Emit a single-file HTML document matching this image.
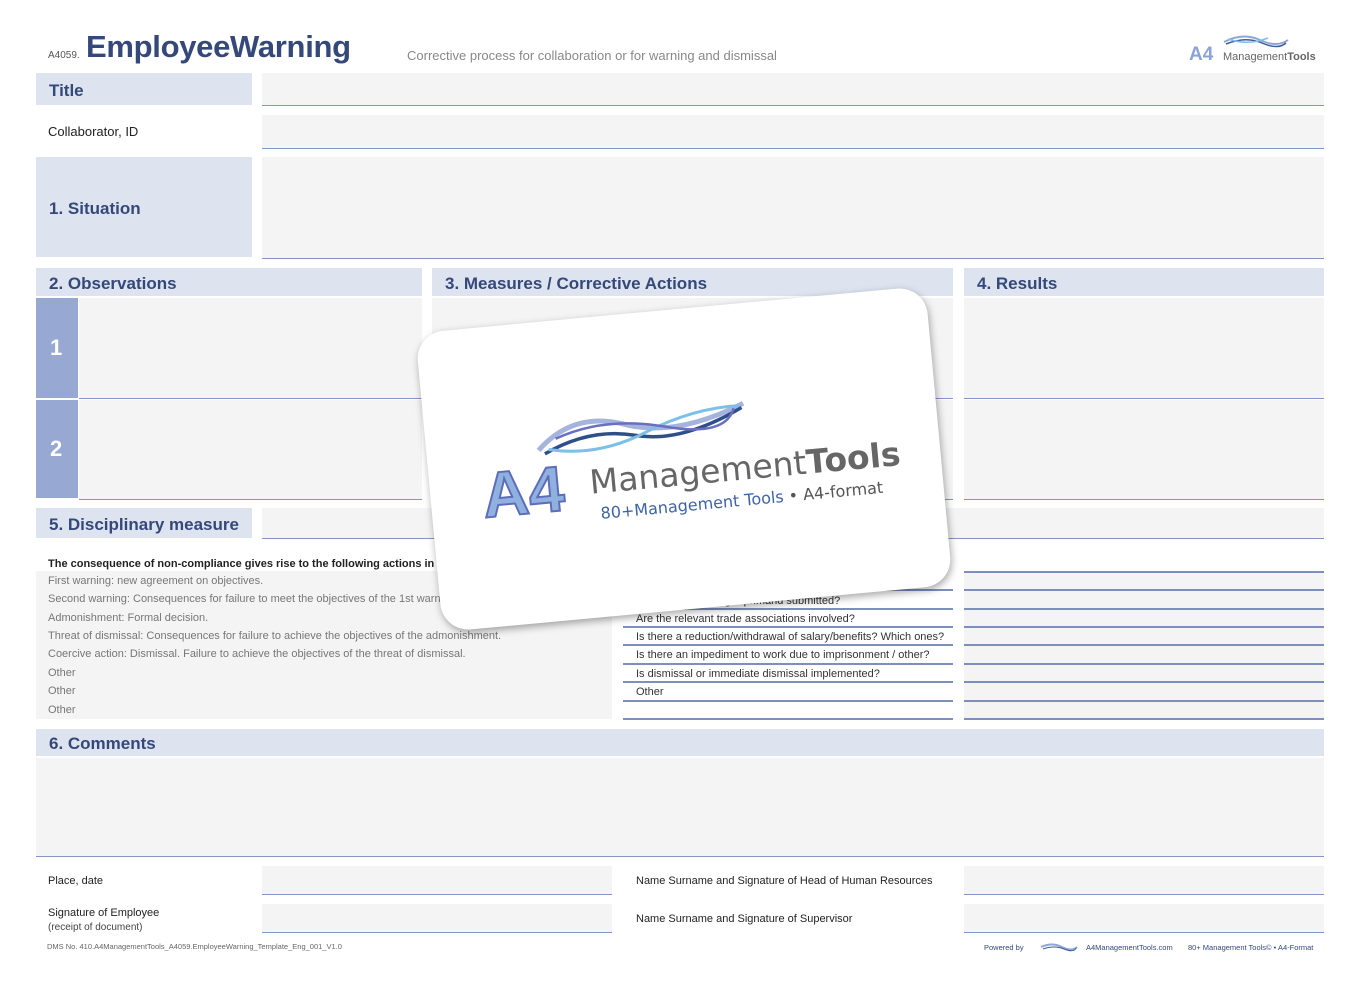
<!DOCTYPE html>
<html><head><meta charset="utf-8"><style>
*{margin:0;padding:0;box-sizing:border-box}
body{width:1362px;height:983px;background:#fff;position:relative;overflow:hidden;font-family:"Liberation Sans",sans-serif;color:#222}
.a{position:absolute}
.lab{position:absolute;background:#dde3ef;color:#34497a;font-weight:bold;font-size:17px;padding-left:13px;padding-top:3px;display:flex;align-items:center}
.f{position:absolute;background:#f4f4f4;border-bottom:1.5px solid #8496c3}
.num{position:absolute;background:#97a8d2;color:#fff;font-weight:bold;font-size:22px;display:flex;align-items:center;padding-left:14px}
.t{position:absolute;font-size:11px;color:#777}
.r{position:absolute;font-size:11px;color:#333;left:636px}
.ln{position:absolute;height:1.5px;background:#7d90bd}
</style></head><body>
<div class="a" style="left:48px;top:50px;font-size:10px;color:#555">A4059.</div>
<div class="a" style="left:86px;top:29px;font-size:31px;font-weight:bold;color:#34497a;letter-spacing:-0.3px">EmployeeWarning</div>
<div class="a" style="left:407px;top:48px;font-size:13px;color:#888">Corrective process for collaboration or for warning and dismissal</div>
<svg class="a" style="left:1188px;top:32px" width="130" height="32" viewBox="0 0 130 32">
<path d="M36 10 Q55 0 72 8 T100 8" stroke="#8fa6d6" stroke-width="2" fill="none"/>
<path d="M38 12 Q58 4 74 11 T98 11" stroke="#3f5c95" stroke-width="1.5" fill="none"/>
<path d="M40 7 Q60 14 80 6" stroke="#7cc0ea" stroke-width="1.5" fill="none"/>
<text x="1" y="28" font-family="Liberation Sans" font-weight="bold" font-size="19" fill="#8aa3d8">A4</text>
<text x="35" y="28" font-family="Liberation Sans" font-size="11" fill="#666">Management<tspan font-weight="bold">Tools</tspan></text>
</svg>

<div class="lab" style="left:36px;top:73px;width:216px;height:32px">Title</div>
<div class="f" style="left:262px;top:73px;width:1062px;height:33px"></div>
<div class="a" style="left:48px;top:124px;font-size:13px;color:#222">Collaborator, ID</div>
<div class="f" style="left:262px;top:115px;width:1062px;height:34px"></div>
<div class="lab" style="left:36px;top:157px;width:216px;height:100px">1. Situation</div>
<div class="f" style="left:262px;top:157px;width:1062px;height:102px"></div>

<div class="lab" style="left:36px;top:268px;width:386px;height:28px">2. Observations</div>
<div class="lab" style="left:432px;top:268px;width:521px;height:28px">3. Measures / Corrective Actions</div>
<div class="lab" style="left:964px;top:268px;width:360px;height:28px">4. Results</div>
<div class="num" style="left:36px;top:298px;width:42px;height:100px">1</div>
<div class="f" style="left:79px;top:298px;width:343px;height:101px"></div>
<div class="f" style="left:432px;top:298px;width:521px;height:101px"></div>
<div class="f" style="left:964px;top:298px;width:360px;height:101px"></div>
<div class="num" style="left:36px;top:400px;width:42px;height:98px">2</div>
<div class="f" style="left:79px;top:400px;width:343px;height:100px"></div>
<div class="f" style="left:432px;top:400px;width:521px;height:100px"></div>
<div class="f" style="left:964px;top:400px;width:360px;height:100px"></div>

<div class="lab" style="left:36px;top:508px;width:216px;height:30px">5. Disciplinary measure</div>
<div class="f" style="left:262px;top:508px;width:1062px;height:31px"></div>
<div class="a" style="left:48px;top:558px;font-size:11px;font-weight:bold;color:#222">The consequence of non-compliance gives rise to the following actions in</div>
<div class="a" style="left:36px;top:571px;width:576px;height:148px;background:#f4f4f4"></div>
<div class="t" style="left:48px;top:575px">First warning: new agreement on objectives.</div>
<div class="t" style="left:48px;top:593px">Second warning: Consequences for failure to meet the objectives of the 1st warning.</div>
<div class="t" style="left:48px;top:612px">Admonishment: Formal decision.</div>
<div class="t" style="left:48px;top:630px">Threat of dismissal: Consequences for failure to achieve the objectives of the admonishment.</div>
<div class="t" style="left:48px;top:648px">Coercive action: Dismissal. Failure to achieve the objectives of the threat of dismissal.</div>
<div class="t" style="left:48px;top:667px">Other</div>
<div class="t" style="left:48px;top:685px">Other</div>
<div class="t" style="left:48px;top:704px">Other</div>

<div class="a" style="left:964px;top:571px;width:360px;height:148px;background:#f4f4f4"></div>
<div class="ln" style="left:964px;top:571px;width:360px"></div>
<div class="ln" style="left:964px;top:589px;width:360px"></div>
<div class="ln" style="left:964px;top:608px;width:360px"></div>
<div class="ln" style="left:964px;top:626px;width:360px"></div>
<div class="ln" style="left:964px;top:644px;width:360px"></div>
<div class="ln" style="left:964px;top:663px;width:360px"></div>
<div class="ln" style="left:964px;top:681px;width:360px"></div>
<div class="ln" style="left:964px;top:700px;width:360px"></div>
<div class="ln" style="left:964px;top:718px;width:360px"></div>

<div class="ln" style="left:623px;top:589px;width:330px"></div>
<div class="ln" style="left:623px;top:608px;width:330px"></div>
<div class="ln" style="left:623px;top:626px;width:330px"></div>
<div class="ln" style="left:623px;top:644px;width:330px"></div>
<div class="ln" style="left:623px;top:663px;width:330px"></div>
<div class="ln" style="left:623px;top:681px;width:330px"></div>
<div class="ln" style="left:623px;top:700px;width:330px"></div>
<div class="ln" style="left:623px;top:718px;width:330px"></div>
<div class="r" style="top:595px">Is a written warning/reprimand submitted?</div>
<div class="r" style="top:613px">Are the relevant trade associations involved?</div>
<div class="r" style="top:631px">Is there a reduction/withdrawal of salary/benefits? Which ones?</div>
<div class="r" style="top:649px">Is there an impediment to work due to imprisonment / other?</div>
<div class="r" style="top:668px">Is dismissal or immediate dismissal implemented?</div>
<div class="r" style="top:686px">Other</div>

<div class="lab" style="left:36px;top:729px;width:1288px;height:27px">6. Comments</div>
<div class="f" style="left:36px;top:758px;width:1288px;height:99px"></div>

<div class="a" style="left:48px;top:875px;font-size:11px;color:#222">Place, date</div>
<div class="f" style="left:262px;top:866px;width:350px;height:29px"></div>
<div class="a" style="left:636px;top:875px;font-size:11px;color:#222">Name Surname and Signature of Head of Human Resources</div>
<div class="f" style="left:964px;top:866px;width:360px;height:29px"></div>
<div class="a" style="left:48px;top:906px;font-size:11px;color:#222;line-height:14px">Signature of Employee<br><span style="font-size:10px;color:#444">(receipt of document)</span></div>
<div class="f" style="left:262px;top:904px;width:350px;height:29px"></div>
<div class="a" style="left:636px;top:913px;font-size:11px;color:#222">Name Surname and Signature of Supervisor</div>
<div class="f" style="left:964px;top:904px;width:360px;height:29px"></div>
<div class="a" style="left:47px;top:942px;font-size:7.5px;color:#666">DMS No. 410.A4ManagementTools_A4059.EmployeeWarning_Template_Eng_001_V1.0</div>
<div class="a" style="left:984px;top:943px;font-size:7.5px;color:#34497a">Powered by</div>
<svg class="a" style="left:1040px;top:942px" width="38" height="10"><path d="M1 5 Q12 0 22 5 T37 5" stroke="#8fa6d6" stroke-width="2" fill="none"/><path d="M3 7 Q14 3 24 7 T36 6" stroke="#3f5c95" stroke-width="1" fill="none"/></svg>
<div class="a" style="left:1086px;top:943px;font-size:7.5px;color:#34497a">A4ManagementTools.com</div>
<div class="a" style="left:1188px;top:943px;font-size:7.5px;color:#34497a">80+ Management Tools© • A4-Format</div>

<div class="a" style="left:428px;top:309px;width:512px;height:300px;background:#fff;border-radius:28px;transform:rotate(-5.3deg);box-shadow:1px 3px 8px rgba(0,0,0,0.35)">
<svg width="512" height="300" viewBox="0 0 512 300">
<path d="M112 128 Q150 92 200 110 T320 100" stroke="#a5b4dc" stroke-width="5" fill="none"/>
<path d="M118 132 Q165 110 210 122 T318 104" stroke="#2f4f8a" stroke-width="3.5" fill="none"/>
<path d="M122 128 Q170 140 220 120 T316 102" stroke="#7cc0ea" stroke-width="3" fill="none"/>
<path d="M130 118 Q180 100 240 116 T310 104" stroke="#6a6fbf" stroke-width="2.5" fill="none"/>
<text x="52" y="190" font-family="Liberation Sans" font-weight="bold" font-size="64" fill="#8fb1e0" stroke="#5f6db8" stroke-width="2">A4</text>
<text x="160" y="176" font-family="DejaVu Sans" font-size="33" fill="#666">Management<tspan font-weight="bold">Tools</tspan></text>
<text x="168" y="202" font-family="DejaVu Sans" font-size="16" fill="#3f63a8">80+Management Tools<tspan fill="#555"> • A4-format</tspan></text>
</svg></div>
</body></html>
